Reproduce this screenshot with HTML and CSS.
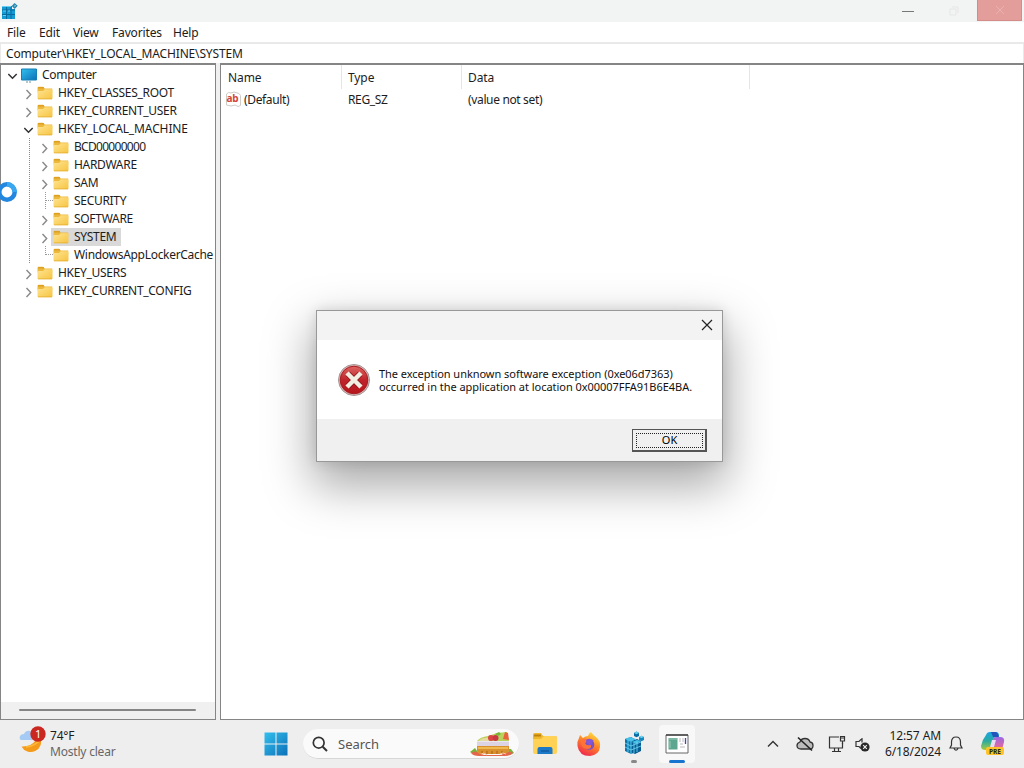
FILE: index.html
```html
<!DOCTYPE html>
<html lang="en">
<head>
<meta charset="utf-8">
<title>Registry Editor</title>
<link rel="stylesheet" href="styles.css">
</head>
<body>
<svg class="defs" width="0" height="0" aria-hidden="true">
  <defs>
    <linearGradient id="folderFill" x1="0" y1="0" x2="1" y2="1"><stop offset="0" stop-color="#ffe493"/><stop offset="1" stop-color="#f6c440"/></linearGradient>
    <linearGradient id="blueFill" x1="0" y1="0" x2="1" y2="1"><stop offset="0" stop-color="#32c0ee"/><stop offset="1" stop-color="#0c70b8"/></linearGradient>
    <symbol id="folder" viewBox="0 0 16 14"><path d="M.5 2Q.5.7 1.800.7H6L7.800 2.500h7.400v4H.5Z" fill="#edb93c"/><path d="M1 1.800h6" stroke="#d99a1c" stroke-width="1.200"/><path d="M.5 5H6l1.800-1.800H14.500q1 0 1 1v8q0 1-1 1h-13q-1 0-1-1Z" fill="url(#folderFill)"/><path d="M1 12.800h14" stroke="#e4ad32" stroke-width=".7"/></symbol>
    <symbol id="closed" viewBox="0 0 10 12"><path d="M2.500 2l4.200 4.500L2.500 11" fill="none" stroke="#888" stroke-width="1.400"/></symbol>
    <symbol id="open" viewBox="0 0 10 12"><path d="M.3 4l4.200 4.300L8.700 4" fill="none" stroke="#333" stroke-width="1.500"/></symbol>
    <symbol id="cubes" viewBox="0 0 22 24"><path d="M2 8l6-2 5 3v12l-5 2-6-3Z" fill="#0b75ad"/><path d="M8 11l6-3 4 2v10l-6 3-4-2Z" fill="#075b91"/><path d="M2 8l5-2 6 2-5 3ZM9 11l5-2 4 1-5 3Z" fill="#48c1e9"/><path d="M2 12l6 3 10-4M2 16l6 3 10-4M5 9v12M8 11v12M11 12v10M14 11v10" fill="none" stroke="#69cff0" stroke-width=".9"/><path d="M11 2l2.500-1.500L16 2v3l-2.500 1.300L11 5Z" fill="#086da7"/><path d="M11 2l2.500-1.500L16 2l-2.500 1.200Z" fill="#60cff0"/><path d="M16 6l2.500-1.200L21 6v3l-2.500 1.300L16 9Z" fill="#1488be"/><path d="M16 6l2.500-1.200L21 6l-2.500 1Z" fill="#72d5f1"/></symbol>
  </defs>
</svg>
<div class="desktop">
  <main class="window">
    <header class="titlebar">
      <svg class="app-icon" width="17" height="17" viewBox="0 0 17 17"><path d="M1 3h10v3h3v10H1Z" fill="#159bd3"/><path d="M1 7h13M1 11.500h13M5.500 3v13M10 3v13" stroke="#086a9f" stroke-width="1"/><path d="M1 3.500h9M2 8h3M7 8h2M2 12.500h3" stroke="#67d0f2"/><path d="M13.500 0l3.200 2.800-3 3.200-3-3Z" fill="#2788ad"/><path d="M13.500 1.500l1.500 1.300-1.500 1.500" fill="#8ddbf0"/></svg>
      <div class="controls">
        <span class="min"><svg width="12" height="12" viewBox="0 0 12 12"><path d="M0 6.500h12" stroke="#777"/></svg></span>
        <span class="max"><svg width="10" height="10" viewBox="0 0 10 10"><path d="M1 3h6v6H1ZM3 1h6v6" fill="none" stroke="#e5e7e6"/></svg></span>
        <span class="close"><svg width="10" height="10" viewBox="0 0 10 10"><path d="M1 1l8 8M9 1L1 9" stroke="#e9b1af"/></svg></span>
      </div>
    </header>
    <nav class="menubar"><span class="m-file">File</span><span class="m-edit">Edit</span><span class="m-view">View</span><span class="m-fav">Favorites</span><span>Help</span></nav>
    <div class="address"><span>Computer\HKEY_LOCAL_MACHINE\SYSTEM</span></div>
    <div class="panes">
      <aside class="tree">
        <div class="rows">
          <div class="row"><svg class="chev"><use href="#open"/></svg><svg class="pc" width="16" height="15" viewBox="0 0 16 15"><path d="M.5 1h15v11H.5Z" fill="url(#blueFill)" stroke="#1680b4"/><path d="M5 14h6" stroke="#6e929f" stroke-dasharray="2 1"/></svg><span>Computer</span></div>
          <div class="row l1"><svg class="chev"><use href="#closed"/></svg><svg class="folder"><use href="#folder"/></svg><span>HKEY_CLASSES_ROOT</span></div>
          <div class="row l1"><svg class="chev"><use href="#closed"/></svg><svg class="folder"><use href="#folder"/></svg><span>HKEY_CURRENT_USER</span></div>
          <div class="row l1"><svg class="chev"><use href="#open"/></svg><svg class="folder"><use href="#folder"/></svg><span class="hklm">HKEY_LOCAL_MACHINE</span></div>
          <div class="branch">
            <div class="row l2"><svg class="chev"><use href="#closed"/></svg><svg class="folder"><use href="#folder"/></svg><span class="bcd">BCD00000000</span></div>
            <div class="row l2"><svg class="chev"><use href="#closed"/></svg><svg class="folder"><use href="#folder"/></svg><span>HARDWARE</span></div>
            <div class="row l2"><svg class="chev"><use href="#closed"/></svg><svg class="folder"><use href="#folder"/></svg><span>SAM</span></div>
            <div class="row l2 through"><i class="elbow"></i><svg class="folder"><use href="#folder"/></svg><span>SECURITY</span></div>
            <div class="row l2"><svg class="chev"><use href="#closed"/></svg><svg class="folder"><use href="#folder"/></svg><span>SOFTWARE</span></div>
            <div class="row l2 selected"><svg class="chev"><use href="#closed"/></svg><svg class="folder"><use href="#folder"/></svg><span>SYSTEM</span></div>
            <div class="row l2"><i class="elbow"></i><svg class="folder"><use href="#folder"/></svg><span class="wal">WindowsAppLockerCache</span></div>
          </div>
          <div class="row l1"><svg class="chev"><use href="#closed"/></svg><svg class="folder"><use href="#folder"/></svg><span>HKEY_USERS</span></div>
          <div class="row l1"><svg class="chev"><use href="#closed"/></svg><svg class="folder"><use href="#folder"/></svg><span>HKEY_CURRENT_CONFIG</span></div>
        </div>
        <div class="scrollbar"><i></i></div>
      </aside>
      <section class="values">
        <div class="grid head"><span>Name</span><span>Type</span><span>Data</span></div>
        <div class="grid value"><span class="name"><svg width="17" height="17" viewBox="0 0 17 17"><path d="M1.500 3l2 -1.500L6 2l3-1 5 1.500 1.500 2v10l-2.500 1-3-1.500-4 1-4.500-1Z" fill="#fff" stroke="#cfccc7"/><text x="1.500" y="10.500" class="ab">ab</text></svg><span>(Default)</span></span><span>REG_SZ</span><span>(value not set)</span></div>
      </section>
    </div>
  </main>

  <footer class="taskbar">
    <div class="weather">
      <svg width="28" height="30" viewBox="0 0 28 30"><path d="M3 15q-2-1-1-4 1-2 4-2 2-4 6-3l4 5-2 4Z" fill="#a5caf4"/><path d="M22 13a9.500 9 0 1 1-18.500 8.500Q13 22 18 15Z" fill="#f59b1b"/><path d="M22 15q-5 6-14 7" stroke="#ffb93a" stroke-width="1.500" fill="none"/><circle cx="20" cy="9" r="7.700" fill="#c92720"/><text x="20" y="13" text-anchor="middle" class="badge">1</text></svg>
      <div class="weather-text"><span>74°F</span><span class="muted">Mostly clear</span></div>
    </div>
    <div class="apps">
      <svg class="start" width="24" height="24" viewBox="0 0 24 24"><path d="M.5.5h11v11H.5ZM12.500.5h11v11h-11ZM.5 12.500h11v11H.5ZM12.500 12.500h11v11h-11Z" fill="url(#blueFill)"/></svg>
      <div class="search">
        <svg width="16" height="16" viewBox="0 0 16 16"><circle cx="6.700" cy="6.700" r="5.400" fill="none" stroke="#333" stroke-width="1.700"/><path d="M10.700 10.700l4.300 4.300" stroke="#333" stroke-width="2"/></svg>
        <span>Search</span>
        <svg class="cake" width="46" height="26" viewBox="0 0 46 26"><path d="M1 21l5-4 4 6-4 1ZM38 18l4 0 3 4-4 2Z" fill="#78b23c"/><path d="M2 22q4-3 8 0l5 2h17l6-3q5-1 6 1-3 3-8 3H10Q4 25 2 22Z" fill="#e2664a"/><path d="M8 14h32v6q-2 3-5 3H14q-6 0-6-3Z" fill="#d8912c"/><path d="M9 17h30" stroke="#f0b850" stroke-width="2"/><path d="M13 20v3M18 20v3M23 20v3M28 20v3M33 20v3" stroke="#bb7020" stroke-width="1.500"/><path d="M8 10.500h32V15H8Z" fill="#dcd4e3"/><path d="M8 10q3-4 11-5l9-3 10-1 2 9Z" fill="#b9d25b"/><path d="M9 10q5-4 11-3v3Z" fill="#e5dba2"/><circle cx="22" cy="7" r="3" fill="#dd4544"/><circle cx="26.500" cy="7" r="3" fill="#c93845"/><path d="M34 8l2-7 3 1 1 7Z" fill="#e8633c"/><path d="M26 3l4-2 2 2-3 2Z" fill="#76b63b"/><path d="M12 23l3-1 3 2M31 23l3-1 3 1" stroke="#fac4a5" fill="none"/></svg>
      </div>
      <svg class="explorer" width="26" height="24" viewBox="0 0 26 24"><path d="M1 3q0-2 2-2h6l2 3h12q2 0 2 2v5H1Z" fill="#f0b72b"/><path d="M2 3.500h7" stroke="#bd8011" stroke-width="2"/><path d="M1 7h8l3-3h11q2 0 2 2v14q0 2-2 2H3q-2 0-2-2Z" fill="#ffd154"/><path d="M5.500 22v-5q0-2 2-2h11q2 0 2 2v5Z" fill="#1b79c8"/><path d="M9 19h8" stroke="#105da3" stroke-width="1.500"/></svg>
      <svg class="firefox" width="26" height="26" viewBox="0 0 26 26"><defs><linearGradient id="fox" x1=".8" y1="0" x2=".3" y2="1"><stop offset="0" stop-color="#ffe744"/><stop offset=".45" stop-color="#ff8a26"/><stop offset="1" stop-color="#ef264f"/></linearGradient></defs><path d="M3 7l1-3 3 3q2-2 5-2 1-3 3-4 2 3 5 5 5 4 4 10-1 8-10 9Q3 25 1.500 15 1 10 3 7Z" fill="url(#fox)"/><circle cx="13" cy="13.500" r="5.300" fill="#7652cc"/><path d="M6 8q4-1 6 1 0 2-3 3 1 3 6 2 1 4-4 4-6-1-6-7Z" fill="#ff7337"/><path d="M10 9q4-3 8 1-3 0-2 2 0 2-3 2-3-1-3-5Z" fill="#8257d8"/></svg>
      <div class="task reg"><svg width="22" height="24"><use href="#cubes"/></svg><i></i></div>
      <div class="task active"><svg width="24" height="20" viewBox="0 0 24 20"><path d="M1 1h22v18H1Z" fill="#fff" stroke="#666"/><path d="M1 1h22" stroke="#333" stroke-width="1.300"/><path d="M3.500 4h9v11.500h-9Z" fill="#5ca58f"/><path d="M4 5h8M5 7v7" stroke="#9accb8"/><path d="M15 4v4M15 10h3M15 13h5M18 4v4" stroke="#bbb"/><path d="M20.500 4v6" stroke="#4b43b7" stroke-width="1.300"/></svg><i></i></div>
    </div>
    <div class="tray">
      <svg class="up" width="12" height="8" viewBox="0 0 12 8"><path d="M1 6.500l5-5 5 5" fill="none" stroke="#333" stroke-width="1.400"/></svg>
      <svg class="cloud" width="18" height="16" viewBox="0 0 18 16"><path d="M5 13q-4 0-4-3.500Q1 7 4 6q1-3.500 5-3.500 4 0 5 3.500 3 .3 3 3.500 0 3.500-3 3.500Z" fill="#bbb" stroke="#333" stroke-width="1.300"/><path d="M2 1.500l14 13" stroke="#222" stroke-width="1.600"/></svg>
      <svg class="net" width="18" height="18" viewBox="0 0 18 18"><path d="M11 2H1.500v11h13V8M4 16.500h9M6.500 13v3M10.500 13v3" fill="none" stroke="#333" stroke-width="1.200"/><path d="M12.500 1.500h4v4.500h-4ZM14.500 6v3M13 3h3" fill="none" stroke="#333" stroke-width="1.200"/></svg>
      <svg class="sound" width="15" height="15" viewBox="0 0 15 15"><path d="M7 1.500L4 4.500H1v5h3l2 2M7 1v4.500" fill="none" stroke="#333" stroke-width="1.200"/><circle cx="10" cy="10" r="4.600" fill="#292929"/><path d="M8.200 8.200l3.600 3.600M11.800 8.200l-3.600 3.600" stroke="#eee" stroke-width="1.200"/></svg>
      <div class="clock"><span class="time">12:57 AM</span><span class="date">6/18/2024</span></div>
      <svg class="bell" width="14" height="16" viewBox="0 0 14 16"><path d="M1 12l1.500-3V6q0-5 4.500-5t4.500 5v3l1.500 3ZM5 12.500q2 3.500 4 0" fill="none" stroke="#333" stroke-width="1.200"/></svg>
      <svg class="copilot" width="26" height="26" viewBox="0 0 26 26"><defs><linearGradient id="co1" x1="0" y1="0" x2="0" y2="1"><stop offset="0" stop-color="#18a6e2"/><stop offset=".5" stop-color="#2baaa0"/><stop offset="1" stop-color="#a8cb3e"/></linearGradient><linearGradient id="co2" x1="0" y1="0" x2="0" y2="1"><stop offset="0" stop-color="#9a68e4"/><stop offset="1" stop-color="#f16a8f"/></linearGradient></defs><path d="M6 4q1-3 4-3h6q3 0 3 4l-5 2-2 8q-1 4-4 4H5q-4 0-4-4 1-6 5-11Z" fill="url(#co1)"/><path d="M11 1h4q3 0 4 5h-6Z" fill="#2255b9"/><path d="M16 6h4q5 0 4 5l-2 8H10l3-10q1-3 3-3Z" fill="url(#co2)"/><path d="M12 9h4l-2 7h-4Z" fill="#e8ddf3"/><rect x="6" y="16" width="18" height="8" rx="2" fill="#ffc329"/><text x="15" y="22.800" text-anchor="middle" class="pre">PRE</text></svg>
    </div>
  </footer>

  <div class="dialog" role="alertdialog">
    <div class="dialog-title"><svg width="12" height="12" viewBox="0 0 12 12"><path d="M1 1l10 10M11 1L1 11" stroke="#222" stroke-width="1.200"/></svg></div>
    <div class="dialog-body">
      <svg width="34" height="34" viewBox="0 0 34 34"><defs><linearGradient id="err" x1="0" y1="0" x2="0" y2="1"><stop offset="0" stop-color="#dc6562"/><stop offset=".5" stop-color="#c0242a"/><stop offset="1" stop-color="#b5161d"/></linearGradient></defs><circle cx="17" cy="17" r="15.500" fill="#deb9b6" stroke="#a09595"/><circle cx="17" cy="17" r="13.800" fill="url(#err)" stroke="#a71c21"/><path d="M11 11l12 12M23 11L11 23" stroke="#851318" stroke-width="6"/><path d="M10 10l14 14M24 10L10 24" stroke="#f2eee2" stroke-width="4.500"/></svg>
      <p><span class="line1">The exception unknown software exception (0xe06d7363)</span><br><span class="line2">occurred in the application at location 0x00007FFA91B6E4BA.</span></p>
    </div>
    <div class="dialog-foot"><button>OK</button></div>
  </div>
  <svg class="busy" width="22" height="22" viewBox="0 0 22 22"><circle cx="11" cy="11" r="7.700" fill="#fff" stroke="#2387df" stroke-width="4.500"/><path d="M11 3.300A7.700 7.700 0 0 1 18.700 11" fill="none" stroke="#39a8f0" stroke-width="4.500"/></svg>
</div>
</body>
</html>
```
FILE: styles.css
```css
* { box-sizing: border-box; }
body { margin: 0; font: 12px/18px "Noto Sans", "Open Sans", sans-serif; color: #1c1c1c; }
svg { display: block; flex: none; }
.defs { position: absolute; }
.desktop { position: relative; width: 1024px; height: 768px; overflow: hidden; display: flex; flex-direction: column; background: #fff; }
.window { height: 720px; display: flex; flex-direction: column; }
.titlebar { height: 22px; flex: none; display: flex; justify-content: space-between; background: #f2f3f3; padding: 3px 2px 0 1px; }
.controls { display: flex; margin-top: -3px; height: 21px; }
.controls span { width: 46px; display: flex; align-items: center; justify-content: center; }
.controls .close { width: 45px; background: #e39e9b; border: 1px solid #d58b88; border-top: 0; }
.menubar { height: 20px; flex: none; display: flex; padding: 2px 7px 0; }
.menubar span { letter-spacing: -.15px; }
.m-file { width: 32px; }
.m-edit { width: 34px; }
.m-view { width: 39px; }
.m-fav { width: 61px; }
.address { height: 21px; flex: none; border: 1px solid #e9e9e9; border-top-width: 2px; border-bottom: 0; padding-left: 5px; line-height: 20px; letter-spacing: -.16px; }
.panes { flex: 1; min-height: 0; display: flex; gap: 4px; background: #f0f0f0; }
.tree { width: 216px; display: flex; flex-direction: column; background: #fff; border: 1px solid #858585; border-top-width: 2px; overflow: hidden; }
.rows { flex: 1; padding-top: 1px; }
.row { height: 18px; display: flex; align-items: center; padding-left: 3px; white-space: nowrap; }
.row span { margin-left: 5px; letter-spacing: -.3px; line-height: 18px; }
.row .hklm { letter-spacing: -.12px; }
.row .bcd { letter-spacing: -.7px; }
.l1 { padding-left: 19px; }
.l2 { padding-left: 35px; }
.chev { width: 10px; height: 12px; margin: 2px 3px 0 4px; }
.folder { width: 16px; height: 14px; }
.branch { background: repeating-linear-gradient(#888 0 1px, transparent 1px 2px) 28px 0 / 1px 100% no-repeat; }
.elbow { width: 8px; height: 9px; margin: 0 0 9px 9px; border: dotted #999; border-width: 0 0 1px 1px; }
.through { background: repeating-linear-gradient(#999 0 1px, transparent 1px 2px) 44px 0 / 1px 100% no-repeat; }
.selected { background: linear-gradient(#d9d9d9, #d9d9d9) 50px 0 / 70px 18px no-repeat; }
.scrollbar { height: 17px; background: #f0f0f0; padding: 7px 19px 0 18px; }
.scrollbar i { display: block; height: 2px; background: #858585; border-radius: 1px; }
.values { flex: 1; background: #fff; border: 1px solid #858585; border-top-width: 2px; }
.grid { display: grid; grid-template-columns: 121px 120px 288px; letter-spacing: -.35px; }
.grid > span { padding-left: 6px; }
.grid > span:first-child { padding-left: 7px; }
.head { height: 24px; }
.head span { border-right: 1px solid #e5e5e5; padding-top: 4px; letter-spacing: -.1px; }
.value { padding-top: 1px; align-items: center; height: 21px; }
.grid > .name:first-child { padding-left: 4px; display: flex; gap: 2px; }
.ab { font: bold 10px "Noto Sans", sans-serif; fill: #d5453b; }
.taskbar { height: 48px; display: flex; background: #eee; position: relative; }
.weather { width: 264px; display: flex; padding: 5px 0 0 18px; gap: 4px; letter-spacing: -.2px; }
.weather-text { display: flex; flex-direction: column; line-height: 16px; padding-top: 3px; }
.muted { color: #666; }
.badge { font: 11px "Noto Sans", sans-serif; fill: #fff; }
.apps { width: 503px; display: flex; align-items: center; }
.search { width: 216px; height: 30px; margin-left: 15px; border-radius: 15px; background: #fafafa; border-bottom: 1px solid #d7d7d7; display: flex; align-items: center; padding: 0 4px 0 9px; font-size: 13px; color: #555; }
.search span { margin-left: 10px; flex: 1; }
.explorer { margin-left: 13px; }
.firefox { margin-left: 18px; }
.task { height: 38px; width: 36px; display: flex; flex-direction: column; align-items: center; justify-content: space-between; padding-top: 6px; }
.task i { width: 6px; height: 3px; border-radius: 2px; background: #888; }
.reg { margin-left: 14px; }
.active { margin-left: 7px; padding-top: 9px; background: #f8f8f8; border-radius: 4px; }
.active i { width: 16px; background: #1775d0; }
.tray { flex: 1; display: flex; align-items: center; }
.cloud { margin-left: 17px; }
.net { margin-left: 14px; }
.sound { margin-left: 9px; }
.clock { width: 71px; display: flex; flex-direction: column; align-items: flex-end; line-height: 16px; letter-spacing: -.1px; }
.bell { margin-left: 8px; }
.copilot { margin-left: 17px; }
.pre { font: bold 6.500px "Noto Sans", sans-serif; fill: #222; }
.dialog { position: absolute; left: 316px; top: 310px; width: 407px; height: 152px; display: flex; flex-direction: column; background: #fff; border: 1px solid #989898; box-shadow: 0 20px 44px 4px rgba(0,0,0,.34), 0 0 12px rgba(0,0,0,.12); font-size: 11px; color: #111; }
.dialog-title { height: 29px; background: #f3f3f3; display: flex; justify-content: flex-end; padding: 8px 9px 0 0; }
.dialog-body { height: 79px; display: flex; padding: 23px 0 0 20px; }
.dialog p { margin: 4px 0 0 8px; line-height: 13px; white-space: nowrap; letter-spacing: -.04px; }
.dialog-foot { flex: 1; background: #f0f0f0; display: flex; justify-content: flex-end; padding: 10px 15px 0 0; }
.dialog button { width: 75px; height: 23px; padding: 0 0 2px 1px; background: #f0f0f0; border: 1px solid #555; border-right-width: 2px; border-bottom-width: 2px; border-radius: 0; font: 11px "Noto Sans", sans-serif; outline: 1px dotted #222; outline-offset: -5px; }
.busy { position: absolute; left: -4px; top: 181px; }
```
